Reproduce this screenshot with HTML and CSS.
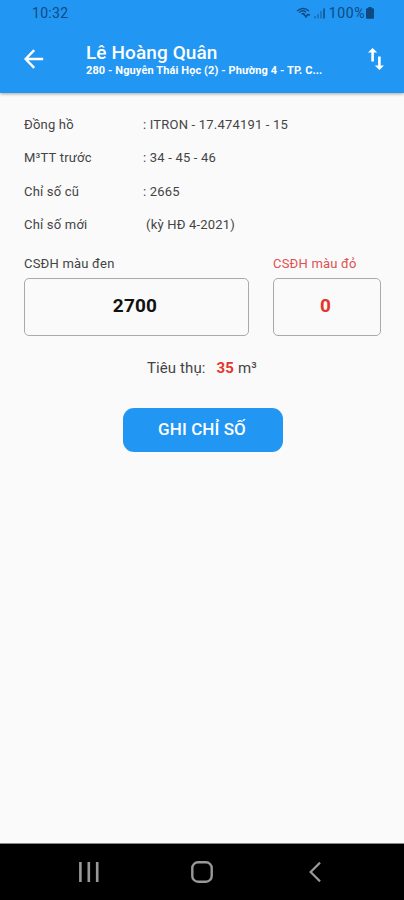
FILE: index.html
```html
<!DOCTYPE html>
<html lang="vi">
<head>
    <meta charset="UTF-8">
    <meta name="viewport" content="width=device-width, initial-scale=1.0">
    <title>Ghi chỉ số</title>
    <link rel="stylesheet" href="styles.css">
</head>
<body>
    <div class="screen">
        <header class="header">
            <div class="status-bar">
                <span class="time">10:32</span>
                <svg class="wifi" width="16" height="12" viewBox="0 0 16 12">
                    <path d="M1 4 Q7 -1 13 4 M3.2 5.5 Q7 2.3 10 5.2 M5.5 7.2 Q7.2 6 8.5 7.5" fill="none" stroke="currentColor" stroke-width="1.4"/>
                    <path d="M7 6 L10 10 L11.5 7.5 L14 8" fill="none" stroke="currentColor" stroke-width="1.5"/>
                </svg>
                <svg class="signal" width="11" height="11" viewBox="0 0 11 11">
                    <path d="M1 8v2.5M4 6v4.5M7 3v7.5" stroke="currentColor" stroke-width="1.5" opacity=".55"/>
                    <path d="M10 .5v10" stroke="currentColor" stroke-width="1.5"/>
                </svg>
                <span class="percent">100%</span>
                <svg class="battery" width="8" height="12" viewBox="0 0 8 12">
                    <path d="M2.3 0h3.4v1.2H7q1 0 1 1v8.6q0 1-1 1H1q-1 0-1-1V2.2q0-1 1-1h1.3z" fill="currentColor"/>
                </svg>
            </div>
            <div class="app-bar">
                <svg class="back" width="20" height="20" viewBox="0 0 20 20">
                    <path d="M19.2 10H2M10.2 1.2L1.6 10l8.6 8.8" fill="none" stroke="currentColor" stroke-width="2.4"/>
                </svg>
                <div class="heading">
                    <h1>Lê Hoàng Quân</h1>
                    <p>280 - Nguyễn Thái Học (2) - Phường 4 - TP. C...</p>
                </div>
                <svg class="swap" width="16" height="22" viewBox="0 0 16 22">
                    <path d="M4.6 0L9.2 4.6H5.9v8.8H3.3V4.6H0zM11.4 22L6.8 17.4h3.3V8.6h2.6v8.8H16z" fill="currentColor"/>
                </svg>
            </div>
        </header>

        <main class="content">
            <dl class="details">
                <dt>Đồng hồ</dt><dd>: ITRON - 17.474191 - 15</dd>
                <dt>M³TT trước</dt><dd>: 34 - 45 - 46</dd>
                <dt>Chỉ số cũ</dt><dd>: 2665</dd>
                <dt>Chỉ số mới</dt><dd class="period">(kỳ HĐ 4-2021)</dd>
            </dl>

            <form class="reading">
                <div class="field">
                    <label for="black">CSĐH màu đen</label>
                    <input type="text" id="black" value="2700">
                </div>
                <div class="field red">
                    <label for="red">CSĐH màu đỏ</label>
                    <input type="text" id="red" value="0">
                </div>
            </form>

            <p class="usage"><span>Tiêu thụ:</span><b>35</b><span>m³</span></p>
            <button type="button" class="submit">GHI CHỈ SỐ</button>
        </main>

        <nav class="nav-bar">
            <svg width="20" height="20" viewBox="0 0 20 20">
                <path d="M1.4 0v20M9.8 0v20M18.2 0v20" stroke="currentColor" stroke-width="2.6"/>
            </svg>
            <svg width="22" height="22" viewBox="0 0 22 22">
                <rect x="1.3" y="1.3" width="19.4" height="19.4" rx="5.8" fill="none" stroke="currentColor" stroke-width="2.4"/>
            </svg>
            <svg class="nav-back" width="12" height="20" viewBox="0 0 12 20">
                <path d="M11 .6L1.6 10l9.4 9.4" fill="none" stroke="currentColor" stroke-width="2.2"/>
            </svg>
        </nav>
    </div>
</body>
</html>
```
FILE: styles.css
```css
* {
    box-sizing: border-box;
}
body {
    margin: 0;
    font-family: Roboto, "Noto Sans", sans-serif;
    background: #fafafa;
    color: #444;
}
.screen {
    display: flex;
    flex-direction: column;
    height: 900px;
    overflow: hidden;
}
.header {
    height: 93px;
    background: #2196f3;
    box-shadow: 0 1px 3px rgba(0, 0, 0, 0.35);
}
.status-bar {
    display: flex;
    align-items: center;
    height: 26px;
    padding: 0 30px 0 32px;
    font-size: 14px;
    letter-spacing: 0.3px;
    color: #0e4a80;
}
.wifi {
    margin-left: auto;
    margin-right: 2px;
}
.signal {
    margin-right: 4px;
}
.percent {
    margin-right: 1px;
    letter-spacing: 0.6px;
}
.app-bar {
    display: flex;
    align-items: center;
    height: 67px;
    padding: 0 20px 1px 24px;
    color: #fff;
}
.heading {
    flex: 1;
    margin-left: 42px;
    padding-top: 1px;
}
h1 {
    margin: 0;
    font-size: 19px;
    line-height: 22px;
    font-weight: 500;
    letter-spacing: 0.1px;
}
.heading p {
    margin: 0;
    font-size: 11px;
    line-height: 13px;
    font-weight: 700;
    letter-spacing: 0.1px;
    white-space: nowrap;
}
.content {
    flex: 1;
    padding: 15px 22px 0 24px;
}
.details {
    display: grid;
    grid-template-columns: 119px 1fr;
    grid-auto-rows: 33.3px;
    align-items: center;
    margin: 0;
    font-size: 13px;
    letter-spacing: 0.2px;
}
dd {
    margin: 0;
}
.period {
    padding-left: 3px;
}
.reading {
    display: grid;
    grid-template-columns: 225px 108px;
    column-gap: 24px;
    margin-top: 15px;
}
label {
    display: block;
    height: 22px;
    font-size: 13px;
    line-height: 15px;
    letter-spacing: 0.2px;
}
input {
    display: block;
    width: 100%;
    height: 58px;
    padding: 0 3px 3px 0;
    border: 1px solid #aaa;
    border-radius: 5px;
    background: transparent;
    font: 700 19px Roboto, sans-serif;
    letter-spacing: 0.2px;
    text-align: center;
    color: #111;
}
.red label {
    color: #e05050;
}
.red input {
    color: #e53528;
}
.usage {
    display: flex;
    margin: 23px 0 0 123px;
    font-size: 15px;
    line-height: 18px;
    letter-spacing: 0.1px;
}
.usage b {
    margin: 0 4px 0 11px;
    color: #e53528;
}
.submit {
    display: block;
    width: 160px;
    height: 44px;
    margin: 31px 0 0 99px;
    padding: 0 2px 2px 0;
    border: none;
    border-radius: 11px;
    background: #2196f3;
    color: #fff;
    font: 500 17px Roboto, sans-serif;
    letter-spacing: 0.1px;
}
.nav-bar {
    display: flex;
    align-items: center;
    height: 57px;
    padding: 0 0 0 79px;
    border-top: 1px solid #888;
    gap: 92px;
    background: #000;
    color: #999;
}
.nav-back {
    margin-left: 4px;
}
```
